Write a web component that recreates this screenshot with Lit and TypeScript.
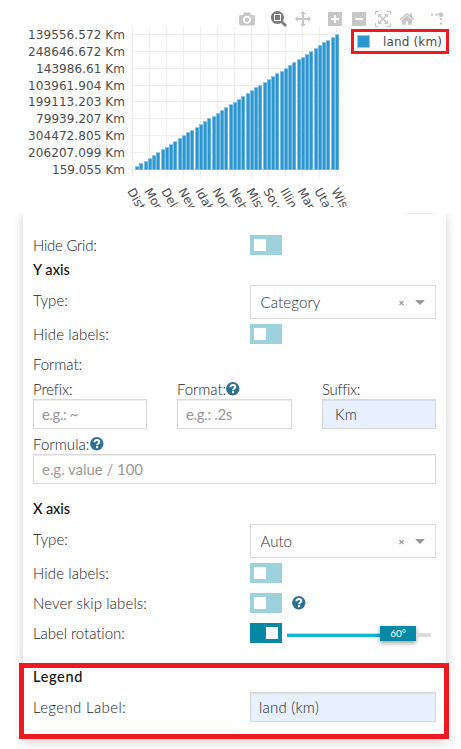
import { LitElement, html, css, svg, nothing } from "lit";
import { customElement, property } from "lit/decorators.js";

/** Text run tracked to a given width. */
@customElement("tracked-text")
class TrackedText extends LitElement {
  static styles = css`
    :host { display: inline-block; white-space: pre; }
  `;
  @property({ type: Number }) w = 0;
  @property() text = "";
  render() {
    return html`<span>${this.text}</span>`;
  }
  updated() {
    const span = this.renderRoot.querySelector("span") as HTMLElement;
    span.style.letterSpacing = "0";
    const natural = span.getBoundingClientRect().width;
    span.style.letterSpacing = `${(this.w - natural) / this.text.length}px`;
  }
}

const t = (text: string, w: number) => html`<tracked-text .text=${text} .w=${w}></tracked-text>`;

@customElement("help-icon")
class HelpIcon extends LitElement {
  static styles = css`
    :host { display: block; width: 14px; height: 14px; }
    svg { display: block; }
  `;
  render() {
    return html`<svg width="14" height="14" viewBox="0 0 14 14">
      <circle cx="6.800" cy="6.800" r="6.700" fill="#2f6f92" />
      <path d="M4.500 5.300C4.500 3.700 5.500 3 6.900 3c1.500 0 2.400.8 2.400 2C9.300 6.600 7.100 6.500 7.100 8.300" fill="none" stroke="#fff" stroke-width="2" />
      <rect x="6" y="9.200" width="2.100" height="2" fill="#fff" />
    </svg>`;
  }
}

@customElement("toggle-switch")
class ToggleSwitch extends LitElement {
  static styles = css`
    :host { display: block; }
    .track { box-sizing: border-box; width: 32px; height: 20px; padding: 4px; background: #9dd1db; display: flex; }
    .on { background: #0789a6; justify-content: flex-end; }
    .knob { width: 12px; height: 12px; background: #fff; }
  `;
  @property({ type: Boolean }) on = false;
  render() {
    return html`<div class="track ${this.on ? "on" : ""}"><div class="knob"></div></div>`;
  }
}

@customElement("select-box")
class SelectBox extends LitElement {
  static styles = css`
    .box { box-sizing: border-box; width: 186px; height: 34px; border: 1px solid #d9d9d9; background: #fff; display: flex; align-items: center; padding: 0 10px 0 9.5px; color: #333; }
    .value { flex: 1; }
    .mark { display: block; }
  `;
  @property() value = "";
  @property({ type: Number }) w = 0;
  render() {
    return html`<div class="box">
      <span class="value">${t(this.value, this.w)}</span>
      <svg class="mark" width="26" height="12" viewBox="0 0 26 12">
        <path d="M.5 5l4 4M4.500 5l-4 4" stroke="#999" stroke-width="1.100" fill="none" />
        <path d="M16 4h10l-5 5z" fill="#999" />
      </svg>
    </div>`;
  }
}

const ICONS: { x: number; d: string; active?: boolean; k?: number }[] = [
  { x: 239, d: "m500 450c-83 0-150-67-150-150 0-83 67-150 150-150 83 0 150 67 150 150 0 83-67 150-150 150z m400 150h-120c-16 0-34 13-39 29l-31 93c-6 15-23 28-40 28h-340c-16 0-34-13-39-28l-31-94c-6-15-23-28-40-28h-120c-55 0-100-45-100-100v-450c0-55 45-100 100-100h800c55 0 100 45 100 100v450c0 55-45 100-100 100z m-400-550c-138 0-250 112-250 250 0 138 112 250 250 250 138 0 250-112 250-250 0-138-112-250-250-250z m365 380c-19 0-35 16-35 35 0 19 16 35 35 35 19 0 35-16 35-35 0-19-16-35-35-35z" },
  { x: 271, active: true, d: "m1000-25l-250 251c40 63 63 138 63 218 0 224-182 406-407 406-224 0-406-182-406-406s183-406 407-406c80 0 155 22 218 62l250-250 125 125z m-812 250l0 438 437 0 0-438-437 0z m62 375l313 0 0-312-313 0 0 312z" },
  { x: 295, d: "m1000 350l-187 188 0-125-250 0 0 250 125 0-188 187-187-187 125 0 0-250-250 0 0 125-188-188 186-187 0 125 252 0 0-250-125 0 187-188 188 188-125 0 0 250 250 0 0-126 187 188z" },
  { x: 328, d: "m1 787l0-875 875 0 0 875-875 0z m687-500l-187 0 0-187-125 0 0 187-188 0 0 125 188 0 0 187 125 0 0-187 187 0 0-125z" },
  { x: 352, d: "m0 788l0-876 875 0 0 876-875 0z m688-500l-500 0 0 125 500 0 0-125z" },
  { x: 375, d: "m250 850l-187 0-63 0 0-62 0-188 63 0 0 188 187 0 0 62z m688 0l-188 0 0-62 188 0 0-188 62 0 0 188 0 62-62 0z m-875-938l0 188-63 0 0-188 0-62 63 0 187 0 0 62-187 0z m875 188l0-188-188 0 0-62 188 0 62 0 0 62 0 188-62 0z m-125 188l-1 0-93-94-156 156 156 156 92-93 2 0 0 250-250 0 0-2 93-92-156-156-156 156 94 92 0 2-250 0 0-250 0 0 93 93 157-156-157-156-93 94 0 0 0-250 250 0 0 0-94 93 156 157 156-157-93-93 0 0 250 0 0 250z" },
  { x: 399.500, d: "m786 296v-267q0-15-11-26t-25-10h-214v214h-143v-214h-214q-15 0-25 10t-11 26v267q0 1 0 2t0 2l321 264 321-264q1-1 1-4z m124 39l-34-41q-5-5-12-6h-2q-7 0-12 3l-386 322-386-322q-7-4-13-4-7 2-12 7l-35 41q-4 5-3 12t6 12l401 334q18 15 42 15t43-15l136-114v109q0 8 5 13t13 5h107q8 0 13-5t5-13v-227l122-102q5-5 6-12t-4-13z" },
  { x: 431, k: 1.5, d: "M512 409c0-57-46-104-103-104-57 0-104 47-104 104 0 57 47 103 104 103 57 0 103-46 103-103z m-327-39l92 0 0 92-92 0z m-185 0l92 0 0 92-92 0z m370-186l92 0 0 93-92 0z m0-184l92 0 0 92-92 0z" },
];

const Y_TICKS: [string, number][] = [
  ["139556.572 Km", 97], ["248646.672 Km", 97], ["143986.61 Km", 89], ["103961.904 Km", 97], ["199113.203 Km", 97],
  ["79939.207 Km", 89], ["304472.805 Km", 97], ["206207.099 Km", 97], ["159.055 Km", 73],
];
const ROWS = [34.5, 51.5, 68.5, 85.5, 101.5, 118.5, 135.5, 152.5, 169.5];
const X_TICKS = ["Dist", "Mon", "Dela", "New", "Idah", "Nort", "Neb", "Miss", "Sou", "Illino", "Mar", "Utah", "Wis"];

@customElement("bar-chart")
class BarChart extends LitElement {
  static styles = css`
    :host { display: block; height: 207px; }
    svg { display: block; }
    .tick { font: 12px "DejaVu Sans", Verdana, sans-serif; fill: #4c4c4c; }
    .grid { stroke: #eee; stroke-width: 1; }
    .bar { fill: #2b96cf; }
    .edge { fill: #95cbe7; }
    .icon { fill: rgba(68, 68, 68, 0.3); }
    .active { fill: rgba(68, 68, 68, 0.7); }
    .frame { fill: none; stroke: #ee1822; stroke-width: 3; }
  `;
  render() {
    const bars = Array.from({ length: 48 }, (_, i) => {
      const x = Math.round(132.5 + (i + 1) * 4.25 - 1.7);
      const top = Math.round(169 - (i + 1) * 2.8125);
      return svg`<rect class="edge" x=${x} y=${top} width="4" height=${170 - top} />
        <rect class="bar" x=${x + 0.8} y=${top + 1} width="2.700" height=${168.5 - top} />`;
    });
    return html`<svg width="461" height="207" viewBox="0 0 461 207">
      ${ROWS.map((y) => svg`<line class="grid" x1="130" x2="340" y1=${y} y2=${y} />`)}
      ${X_TICKS.map((_, i) => svg`<line class="grid" x1=${132.5 + 17 * i} x2=${132.5 + 17 * i} y1="27" y2="177" />`)}
      ${bars}
      ${Y_TICKS.map(([s, w], i) => svg`<text class="tick" x=${125 - w} y=${ROWS[i] + 4.2} textLength=${w}>${s}</text>`)}
      ${X_TICKS.map((s, i) => svg`<text class="tick" transform="translate(${127 + 17 * i} 191) rotate(60)">${s}</text>`)}
      ${ICONS.map((c) => svg`<path class="icon ${c.active ? "active" : ""}" transform="translate(${c.x} 11) scale(.016) matrix(${c.k ?? 1} 0 0 ${-(c.k ?? 1)} 0 850)" d=${c.d} />`)}
      <rect class="frame" x="352.500" y="30.500" width="95" height="22" />
      <rect class="edge" x="357" y="35" width="13" height="13" />
      <rect class="bar" x="358" y="36" width="11" height="11" />
      <text class="tick" x="383" y="45.500" textLength="59">land (km)</text>
    </svg>`;
  }
}

@customElement("app-root")
class AppRoot extends LitElement {
  static styles = css`
    :host { display: block; position: relative; width: 461px; height: 749px; overflow: hidden; background: #fff;
      font: 300 15px/20px Lato, "Open Sans", sans-serif; color: #222; }
    .panel { box-sizing: border-box; margin: 6px 15px 0 23px; height: 526px; padding: 0 10px; background: #fff;
      box-shadow: 0 3px 10px rgba(0, 0, 0, 0.2); clip-path: inset(0 -15px -15px -15px); }
    .peek { width: 32px; height: 1px; margin-left: auto; background: #e6f5f7; }
    .row { display: grid; grid-template-columns: 217px 1fr; height: 20px; margin-bottom: 10px; align-items: center; }
    .first { margin: 21px 0 5px; }
    .tight { margin-bottom: 5px; }
    .pick { height: 34px; margin-bottom: 5px; align-items: start; }
    .pick > .name { padding-top: 5px; }
    .head { font-weight: 500; font-size: 14.5px; color: #111; height: 20px; margin-bottom: 5px; }
    .line { height: 20px; margin-bottom: 5px; }
    .ctl { display: flex; align-items: center; }
    .trio { display: grid; grid-template-columns: 114px 115px 114px; column-gap: 30px; }
    .cap { display: flex; height: 20px; align-items: center; }
    .input { box-sizing: border-box; height: 30px; border: 1px solid #d9d9d9; padding: 0 8px; line-height: 28px; color: #999;
      background: #fff; box-shadow: inset 0 1px 1px rgba(0, 0, 0, 0.075); font-weight: 400; }
    .filled { background: #e8effd; color: #22262e; font-weight: 300; }
    .indent { padding-left: 12px; }
    .formula { margin: 5px 0 15px; }
    .help { margin-left: 10px; }
    .slider { width: 144px; height: 20px; margin-left: 5px; display: flex; align-items: center; }
    .done { box-sizing: border-box; width: 93px; height: 4px; background: #0bb4cf; border-top: 1px solid #c9d9dc; margin-top: 4px; }
    .rest { flex: 1; height: 4px; background: #dcdcdc; margin-top: 4px; }
    .thumb { width: 36px; height: 15px; background: #0789a6; color: #fff; font: 400 10px/15px Lato, sans-serif; text-align: center;
      box-shadow: 0 2px 5px rgba(0, 0, 0, 0.4); margin-top: 1px; }
    .legend { margin-top: 24px; }
    .wide { height: 30px; margin: 0; }
    .callout { position: absolute; box-sizing: border-box; left: 19px; top: 663px; width: 430px; height: 76px; border: 5px solid #ee1822; }
  `;

  private toggleRow(label: string, w: number, cls = "", extra: unknown = nothing, on = false) {
    return html`<div class="row ${cls}">
      <span>${t(label, w)}</span>
      <div class="ctl"><toggle-switch ?on=${on}></toggle-switch>${extra}</div>
    </div>`;
  }

  private pickRow(value: string, w: number) {
    return html`<div class="row pick">
      <span class="name">${t("Type:", 35)}</span><select-box value=${value} w=${w}></select-box>
    </div>`;
  }

  render() {
    return html`
      <bar-chart></bar-chart>
      <section class="panel">
        <div class="peek"></div>
        ${this.toggleRow("Hide Grid:", 63.5, "first")}
        <div class="head">${t("Y axis", 37)}</div>
        ${this.pickRow("Category", 60)}
        ${this.toggleRow("Hide labels:", 76)}
        <div class="line">${t("Format:", 49)}</div>
        <div class="trio">
          <div><div class="cap">${t("Prefix:", 39)}</div><div class="input">${t("e.g.: ~", 36)}</div></div>
          <div><div class="cap">${t("Format:", 49)}<help-icon></help-icon></div><div class="input">${t("e.g.: .2s", 46)}</div></div>
          <div><div class="cap">${t("Suffix:", 37)}</div><div class="input filled indent">${t("Km", 22)}</div></div>
        </div>
        <div class="formula">
          <div class="cap">${t("Formula:", 56.5)}<help-icon></help-icon></div>
          <div class="input">${t("e.g. value / 100", 101)}</div>
        </div>
        <div class="head">${t("X axis", 37)}</div>
        ${this.pickRow("Auto", 31.5)}
        ${this.toggleRow("Hide labels:", 76)}
        ${this.toggleRow("Never skip labels:", 114, "", html`<help-icon class="help"></help-icon>`)}
        ${this.toggleRow("Label rotation:", 92, "tight", html`<div class="slider">
          <div class="done"></div><div class="thumb">60°</div><div class="rest"></div></div>`, true)}
        <div class="head legend">${t("Legend", 50)}</div>
        <div class="row wide"><span>${t("Legend Label:", 93)}</span><div class="input filled">${t("land (km)", 60)}</div></div>
      </section>
      <div class="callout"></div>
    `;
  }
}
